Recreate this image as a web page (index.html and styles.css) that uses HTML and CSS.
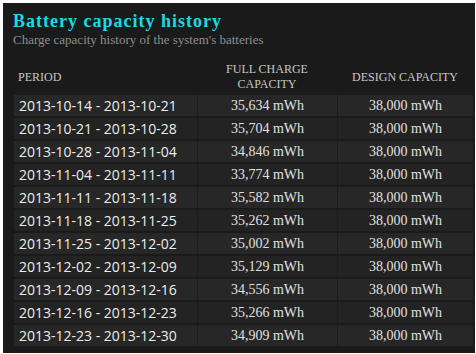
FILE: index.html
```html
<!DOCTYPE html>
<html>
<head>
<meta charset="utf-8">
<link rel="stylesheet" href="styles.css">
</head>
<body>
<div class="panel">
  <h1 class="title">Battery capacity history</h1>
  <p class="subtitle">Charge capacity history of the system's batteries</p>
  <table class="history">
    <thead>
      <tr>
        <th class="col-period">PERIOD</th>
        <th class="col-full">FULL CHARGE<br>CAPACITY</th>
        <th class="col-design">DESIGN CAPACITY</th>
      </tr>
    </thead>
    <tbody>
      <tr><td class="date">2013-10-14 - 2013-10-21</td><td class="num">35,634 mWh</td><td class="num">38,000 mWh</td></tr>
      <tr><td class="date">2013-10-21 - 2013-10-28</td><td class="num">35,704 mWh</td><td class="num">38,000 mWh</td></tr>
      <tr><td class="date">2013-10-28 - 2013-11-04</td><td class="num">34,846 mWh</td><td class="num">38,000 mWh</td></tr>
      <tr><td class="date">2013-11-04 - 2013-11-11</td><td class="num">33,774 mWh</td><td class="num">38,000 mWh</td></tr>
      <tr><td class="date">2013-11-11 - 2013-11-18</td><td class="num">35,582 mWh</td><td class="num">38,000 mWh</td></tr>
      <tr><td class="date">2013-11-18 - 2013-11-25</td><td class="num">35,262 mWh</td><td class="num">38,000 mWh</td></tr>
      <tr><td class="date">2013-11-25 - 2013-12-02</td><td class="num">35,002 mWh</td><td class="num">38,000 mWh</td></tr>
      <tr><td class="date">2013-12-02 - 2013-12-09</td><td class="num">35,129 mWh</td><td class="num">38,000 mWh</td></tr>
      <tr><td class="date">2013-12-09 - 2013-12-16</td><td class="num">34,556 mWh</td><td class="num">38,000 mWh</td></tr>
      <tr><td class="date">2013-12-16 - 2013-12-23</td><td class="num">35,266 mWh</td><td class="num">38,000 mWh</td></tr>
      <tr><td class="date">2013-12-23 - 2013-12-30</td><td class="num">34,909 mWh</td><td class="num">38,000 mWh</td></tr>
    </tbody>
  </table>
</div>
</body>
</html>
```

FILE: styles.css
```css
html, body {
  margin: 0;
  padding: 0;
  background: #ffffff;
}

body {
  padding: 3px 1px 1px 3px;
  height: 354px;
  box-sizing: border-box;
  overflow: hidden;
}

.panel {
  background: #1a1a1a;
  height: 100%;
  box-sizing: border-box;
  padding: 8px 2px 0 10px;
  overflow: hidden;
}

.title {
  margin: 0;
  font-family: "Liberation Serif", "Times New Roman", serif;
  font-weight: bold;
  font-size: 18px;
  letter-spacing: 1px;
  line-height: 21px;
  color: #1ed8e6;
}

.subtitle {
  margin: 0;
  font-family: "Liberation Serif", "Times New Roman", serif;
  font-size: 13px;
  line-height: 16px;
  color: #8e8e8e;
}

.history {
  margin-top: 12px;
  width: 459px;
  border-collapse: separate;
  border-spacing: 0 2px;
  margin-left: 1px;
}

.history th {
  font-family: "Liberation Serif", "Times New Roman", serif;
  font-weight: normal;
  font-size: 12px;
  line-height: 15px;
  color: #c8c8c8;
  padding: 0 0 1px 0;
  vertical-align: middle;
}

.col-period {
  text-align: left;
  padding-left: 4px !important;
  width: 179px;
}

.col-full {
  text-align: center;
  width: 140px;
}

.col-design {
  text-align: center;
}

.history td {
  height: 21px;
  padding: 0;
  background: #272727;
  border-left: 1px solid #1c1c1c;
}

.history tbody tr:nth-child(even) td {
  background: #232323;
}

.history td:first-child {
  border-left: none;
}

.date {
  font-family: "Open Sans", "Noto Sans", sans-serif;
  font-size: 14px;
  color: #ececec;
  padding-left: 5px !important;
  white-space: nowrap;
}

.num {
  font-family: "Liberation Serif", "Times New Roman", serif;
  font-size: 14px;
  color: #e0e0e0;
  text-align: center;
}
```
